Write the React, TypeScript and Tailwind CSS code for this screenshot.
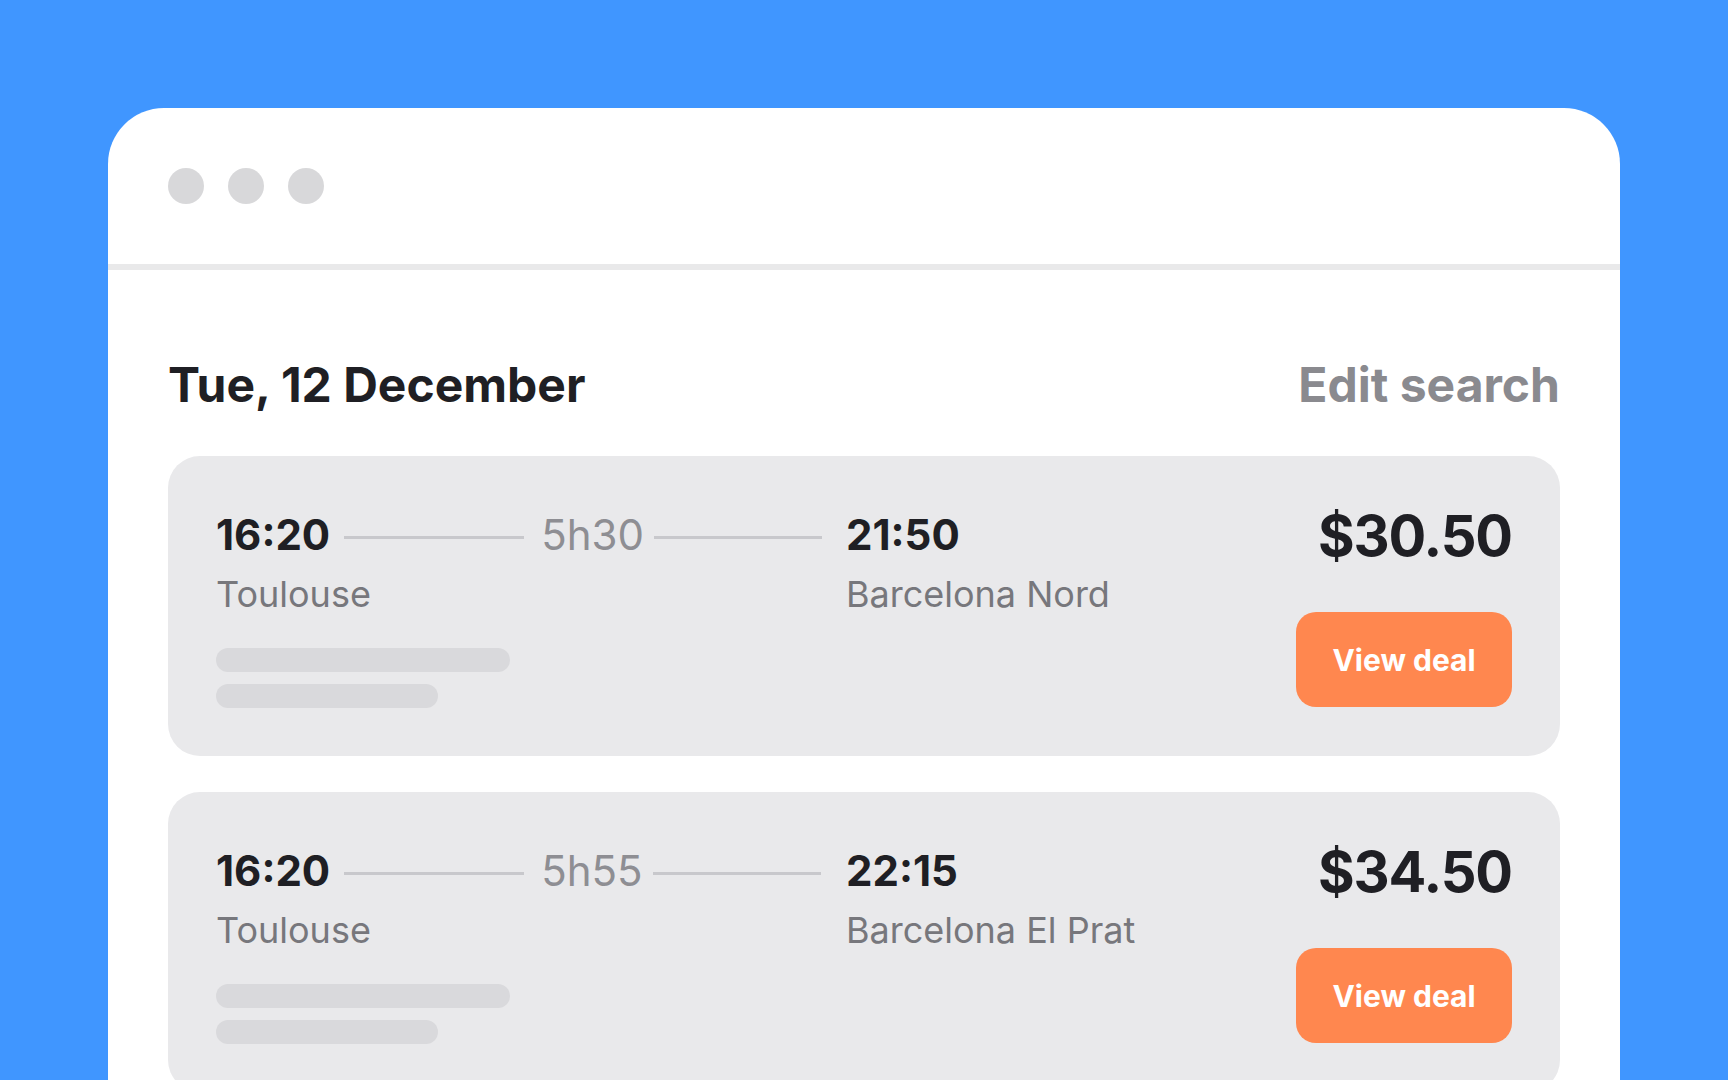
import React from "react";

type Trip = {
  dep: string;
  dur: string;
  arr: string;
  from: string;
  to: string;
  price: string;
};

const trips: Trip[] = [
  { dep: "16:20", dur: "5h30", arr: "21:50", from: "Toulouse", to: "Barcelona Nord", price: "$30.50" },
  { dep: "16:20", dur: "5h55", arr: "22:15", from: "Toulouse", to: "Barcelona El Prat", price: "$34.50" },
];

function TripCard({ t }: { t: Trip }) {
  return (
    <div className="flex justify-between rounded-[32px] bg-[#e9e9eb] p-[48px]">
      <div className="flex flex-col">
        <div className="grid grid-cols-[630px_auto] pt-[2px]">
          <div className="flex h-[58px] items-center">
            <span className="text-[42px] font-bold leading-[58px] text-[#1f1f24]">{t.dep}</span>
            <span className="ml-[14px] mt-[4px] h-[3px] w-[180px] bg-[#c8c8cc]" />
            <span className="ml-[17px] text-[42px] font-normal leading-[58px] text-[#8e8e93]">{t.dur}</span>
            <span className="ml-[10px] mt-[4px] h-[3px] w-[168px] bg-[#c8c8cc]" />
          </div>
          <div className="h-[58px] text-[42px] font-bold leading-[58px] text-[#1f1f24]">{t.arr}</div>
          <div className="mt-[8px] text-[36px] leading-[44px] text-[#77777c]">{t.from}</div>
          <div className="mt-[8px] text-[36px] leading-[44px] text-[#77777c]">{t.to}</div>
        </div>
        <div className="mt-[32px] flex flex-col gap-[12px]">
          <div className="h-[24px] w-[294px] rounded-full bg-[#d9d9dc]" />
          <div className="h-[24px] w-[222px] rounded-full bg-[#d9d9dc]" />
        </div>
      </div>
      <div className="flex flex-col items-end">
        <div className="pt-[1px] text-[56px] font-bold leading-[62px] tracking-[-0.02em] text-[#1f1f24]">{t.price}</div>
        <button className="mt-[45px] flex h-[95px] w-[216px] items-center justify-center rounded-[20px] bg-[#ff874f] pt-[2px] text-[30px] font-bold text-white">
          View deal
        </button>
      </div>
    </div>
  );
}

export default function App() {
  return (
    <div
      className="h-screen w-full overflow-hidden bg-[#4096ff] px-[108px] pt-[108px]"
      style={{ fontFamily: "Inter, 'Noto Sans', sans-serif" }}
    >
      <div className="min-h-[1200px] rounded-t-[56px] bg-white">
        <div className="flex h-[162px] items-center gap-[24px] border-b-[6px] border-[#e9e9ea] px-[60px]">
          <span className="h-[36px] w-[36px] rounded-full bg-[#d8d8da]" />
          <span className="h-[36px] w-[36px] rounded-full bg-[#d8d8da]" />
          <span className="h-[36px] w-[36px] rounded-full bg-[#d8d8da]" />
        </div>
        <div className="px-[60px]">
          <div className="mt-[86px] flex items-baseline justify-between text-[48px] font-bold leading-[58px]">
            <span className="text-[#1f1f24]">Tue, 12 December</span>
            <span className="text-[#8a8a8f]">Edit search</span>
          </div>
          <div className="mt-[42px] flex flex-col gap-[36px]">
            {trips.map((t, i) => (
              <TripCard key={i} t={t} />
            ))}
          </div>
        </div>
      </div>
    </div>
  );
}
